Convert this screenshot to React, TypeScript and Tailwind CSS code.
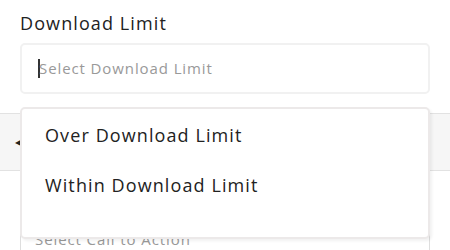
import * as React from "react";

const font = { fontFamily: '"Open Sans", "Liberation Sans", sans-serif' };

export default function App() {
  return (
    <div className="relative h-[250px] w-[450px] overflow-hidden bg-white text-[#222]" style={font}>
      <div className="px-5 pt-[11px]">
        <label className="block text-[18px] leading-[24px] tracking-[1.1px] text-[#222]">
          Download Limit
        </label>
        <div className="relative mt-[8px]">
          <div className="flex h-[51px] w-[410px] items-center rounded-[5px] border-2 border-[#f1f1f1] bg-white pl-[16px]">
            <span className="h-[19px] w-[2px] shrink-0 bg-[#333]" />
            <span className="-ml-[1px] text-[15px] tracking-[0.9px] text-[#999]">Select Download Limit</span>
          </div>
        </div>
      </div>

      <div className="mt-[19px] flex h-[58px] items-center border-y border-[#e2e2e2] bg-[#f6f6f6] pl-[15px]">
        <span className="text-[8px] leading-none text-[#222]">◀</span>
      </div>

      <div className="px-5 pt-[43px]">
        <div className="flex h-[51px] w-[410px] items-center rounded-[5px] border border-[#dedede] bg-white pl-[14px]">
          <span className="text-[15px] tracking-[0.9px] text-[#999]">Select Call to Action</span>
        </div>
      </div>

      <div className="absolute left-[20px] top-[107px] flex h-[132px] w-[410px] flex-col rounded-[5px] border-2 border-[#ece9e9] bg-white pl-[23px] pt-[14px] shadow-[2px_2px_3px_rgba(0,0,0,0.06)]">
        <div className="flex h-[25px] items-center text-[18px] tracking-[1.1px]">Over Download Limit</div>
        <div className="mt-[25px] flex h-[25px] items-center text-[18px] tracking-[1.1px]">Within Download Limit</div>
      </div>
    </div>
  );
}
